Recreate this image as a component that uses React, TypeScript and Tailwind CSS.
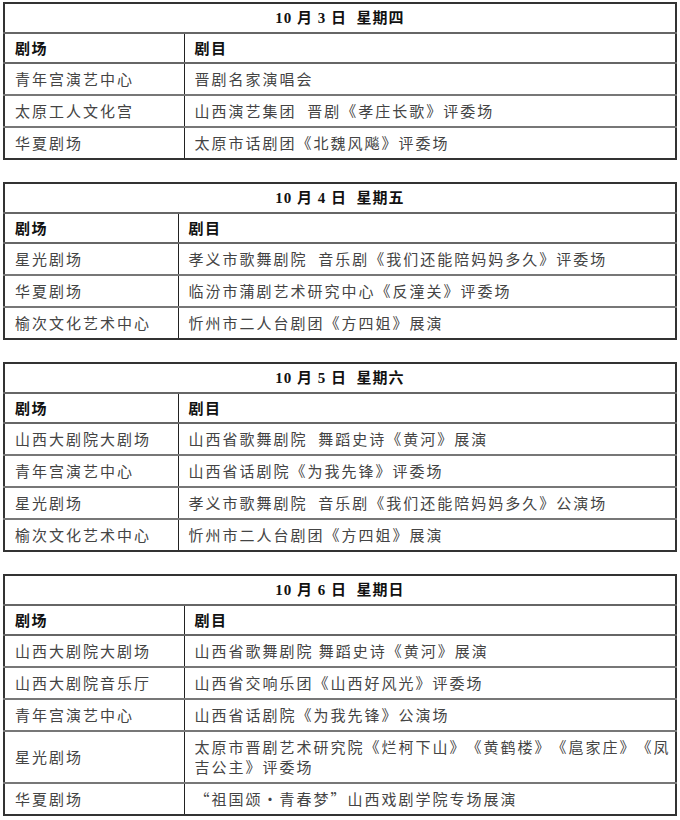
import React from "react";

type Show = { venue: string; program: React.ReactNode; tall?: boolean };

type Day = { title: string; colWidth: string; shows: Show[] };

const days: Day[] = [
  {
    title: "10 月 3 日  星期四",
    colWidth: "w-[180px]",
    shows: [
      { venue: "青年宫演艺中心", program: "晋剧名家演唱会" },
      { venue: "太原工人文化宫", program: "山西演艺集团  晋剧《孝庄长歌》评委场" },
      { venue: "华夏剧场", program: "太原市话剧团《北魏风飚》评委场" },
    ],
  },
  {
    title: "10 月 4 日  星期五",
    colWidth: "w-[174px]",
    shows: [
      { venue: "星光剧场", program: "孝义市歌舞剧院  音乐剧《我们还能陪妈妈多久》评委场" },
      { venue: "华夏剧场", program: "临汾市蒲剧艺术研究中心《反潼关》评委场" },
      { venue: "榆次文化艺术中心", program: "忻州市二人台剧团《方四姐》展演" },
    ],
  },
  {
    title: "10 月 5 日  星期六",
    colWidth: "w-[174px]",
    shows: [
      { venue: "山西大剧院大剧场", program: "山西省歌舞剧院  舞蹈史诗《黄河》展演" },
      { venue: "青年宫演艺中心", program: "山西省话剧院《为我先锋》评委场" },
      { venue: "星光剧场", program: "孝义市歌舞剧院  音乐剧《我们还能陪妈妈多久》公演场" },
      { venue: "榆次文化艺术中心", program: "忻州市二人台剧团《方四姐》展演" },
    ],
  },
  {
    title: "10 月 6 日  星期日",
    colWidth: "w-[180px]",
    shows: [
      { venue: "山西大剧院大剧场", program: "山西省歌舞剧院 舞蹈史诗《黄河》展演" },
      { venue: "山西大剧院音乐厅", program: "山西省交响乐团《山西好风光》评委场" },
      { venue: "青年宫演艺中心", program: "山西省话剧院《为我先锋》公演场" },
      {
        venue: "星光剧场",
        tall: true,
        program: (
          <>
            太原市晋剧艺术研究院《烂柯下山》《黄鹤楼》《扈家庄》《凤
            <br />
            吉公主》评委场
          </>
        ),
      },
      { venue: "华夏剧场", program: "“祖国颂・青春梦”山西戏剧学院专场展演" },
    ],
  },
];

function DayTable({ day }: { day: Day }) {
  return (
    <table className="w-full border-collapse border-2 border-[#333] table-fixed">
      <colgroup>
        <col className={day.colWidth} />
        <col />
      </colgroup>
      <tbody>
        <tr className="h-[30px]">
          <td
            colSpan={2}
            className="p-0 text-center font-bold text-[15px] leading-[20px] text-[#111] whitespace-pre tracking-[1px] border-b-2 border-[#666]"
            style={{ fontFamily: '"Liberation Serif", "Noto Sans CJK SC", serif' }}
          >
            {day.title}
          </td>
        </tr>
        <tr className="h-[30px]">
          <td className="p-0 px-[10px] font-bold text-[15px] leading-[20px] tracking-[1.5px] text-[#111] border-b-2 border-r border-[#666] border-r-[#222]">
            剧场
          </td>
          <td className="p-0 px-[10px] font-bold text-[15px] leading-[20px] tracking-[1.5px] text-[#111] border-b-2 border-[#666]">
            剧目
          </td>
        </tr>
        {day.shows.map((s, i) => {
          const last = i === day.shows.length - 1;
          return (
            <tr key={i} className={s.tall ? "h-[52px]" : "h-[32px]"}>
              <td
                className={`p-0 px-[10px] text-[15px] leading-[20px] text-[#444] tracking-[2px] [text-spacing-trim:space-all] border-r border-r-[#222] ${
                  last ? "" : "border-b-2 border-b-[#777]"
                }`}
              >
                {s.venue}
              </td>
              <td
                className={`p-0 pl-[10px] pr-[4px] text-[15px] leading-[20px] text-[#444] tracking-[2px] [text-spacing-trim:space-all] whitespace-pre ${
                  last ? "" : "border-b-2 border-b-[#777]"
                }`}
              >
                {s.program}
              </td>
            </tr>
          );
        })}
      </tbody>
    </table>
  );
}

export default function App() {
  return (
    <div
      lang="zh-CN"
      className="w-[680px] min-h-[820px] bg-white px-[3px] pt-[2px] pb-[7px] flex flex-col gap-[22px]"
      style={{ fontFamily: '"Noto Sans CJK SC", "Noto Sans", sans-serif' }}
    >
      {days.map((d) => (
        <DayTable key={d.title} day={d} />
      ))}
    </div>
  );
}
